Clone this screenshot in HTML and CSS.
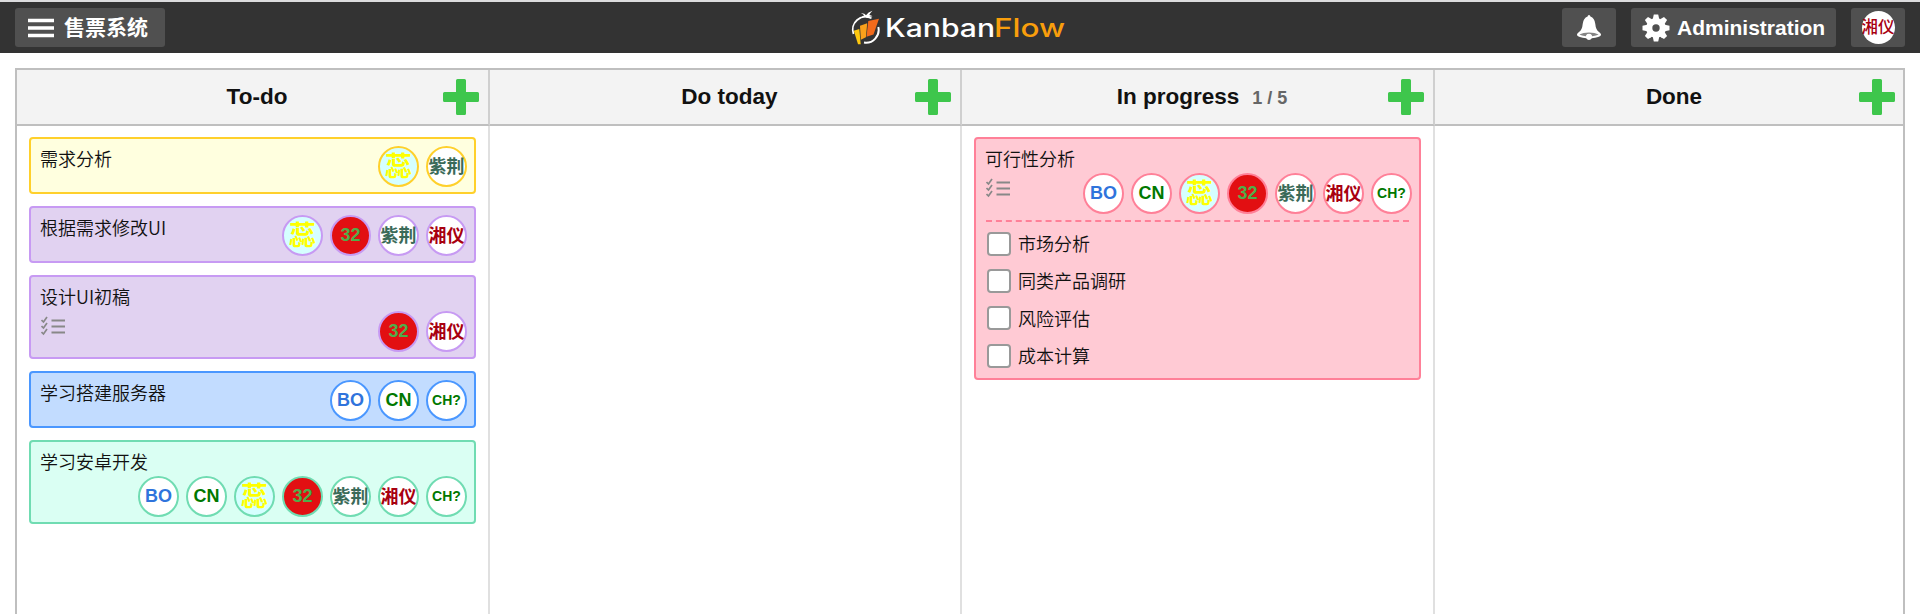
FILE: index.html
```html
<!DOCTYPE html>
<html lang="zh-CN">
<head>
<meta charset="utf-8">
<title>KanbanFlow</title>
<link rel="stylesheet" href="styles.css">
</head>
<body>
<svg class="defs" aria-hidden="true">
  <symbol id="plus" viewBox="0 0 36 36"><path d="M14.500 0h7q1.500 0 1.500 1.500V13h11.500q1.500 0 1.500 1.500v7q0 1.500-1.500 1.500H23v11.500q0 1.500-1.500 1.500h-7q-1.500 0-1.500-1.500V23H1.500Q0 23 0 21.500v-7Q0 13 1.500 13H13V1.500Q13 0 14.500 0z" fill="#3ec64c"/></symbol>
  <symbol id="checklist" viewBox="0 0 24 20"><g fill="none" stroke="#888"><path d="M.5 4l2 2L6 1M.5 10l2 2L6 7M.5 16l2 2L6 13" stroke-width="1.700"/><path d="M10.500 4.500H24M10.500 10.500H24M10.500 16.500H24" stroke-width="2"/></g></symbol>
</svg>
<header class="topbar">
  <div class="side">
    <button class="btn menu"><svg width="28" height="20" viewBox="0 0 28 20"><path d="M1 2.500h26M1 10h26M1 17.500h26" stroke="#fff" stroke-width="3.500"/></svg><span>售票系统</span></button>
  </div>
  <div class="logo">
    <svg class="mark" width="30" height="36" viewBox="0 0 30 36">
      <path d="M3.500 24A12.800 12.800 0 0 1 21.500 8.300" fill="none" stroke="#fff" stroke-width="1.800"/>
      <path d="M14 32.600A12.800 12.800 0 0 0 28.300 17" fill="none" stroke="#fff" stroke-width="2"/>
      <path d="M11 3.300q3.500-.3 5 2Q18 1.800 22.500.7 19.800 3.300 19.300 5q2.200.2 3.200 1.300-3 .3-5 1.700-2.500-1.300-6-.8 1.200-1.600 2.700-1.700Q13.300 4 11 3.300z" fill="#fff"/>
      <path d="M3.800 20.700l5.500-1.800 1.400 15.300H8z" fill="#fec80f"/>
      <path d="M10 15.800l7.200-2.500-1.300 14-5 2.500z" fill="#f9a01b"/>
      <path d="M18.300 10.900L29 8.800l-5.500 15.700-7 2.300z" fill="#f26a1b"/>
    </svg>
    <svg class="word" width="182" height="39" viewBox="0 0 182 39"><text x="1" y="29" textLength="110" lengthAdjust="spacingAndGlyphs" fill="#fff">Kanban</text><text x="110" y="29" textLength="71" lengthAdjust="spacingAndGlyphs" fill="#f99e0c">Flow</text></svg>
  </div>
  <div class="side right">
    <button class="btn bell"><svg width="24" height="25" viewBox="0 0 24 25"><path d="M12 0q1.300 0 1.400 1.500 4.300 1.600 4.900 7.500.5 5.800 3.700 8 2.500 1.700 1.900 3.300-1 2.200-9.200 2.900a3 3 0 0 1-5.400 0Q1.100 22.500.1 20.300-.5 18.700 2 17q3.200-2.200 3.700-8 .6-5.900 4.900-7.500Q10.700 0 12 0z" fill="#fff"/><path d="M2.300 19.600Q6 17.500 12 17.500t9.700 2.100q-2.200 1.300-6.500 1.700a3.400 3.400 0 0 0-6.400 0q-4.300-.4-6.500-1.700z" fill="#858585"/><circle cx="12" cy="21.500" r="2.800" fill="#fff"/></svg></button>
    <button class="btn admin"><svg width="28" height="28" viewBox="-14 -14 28 28"><g fill="#fff"><path id="t" d="M-3-10l.8-3.500h4.400L3-10v20l-.8 3.500h-4.400L-3 10z"/><use href="#t" transform="rotate(45)"/><use href="#t" transform="rotate(90)"/><use href="#t" transform="rotate(135)"/><circle r="10"/></g><circle r="3.700" fill="#505050"/></svg><span>Administration</span></button>
    <button class="btn user"><span class="face">湘仪</span></button>
  </div>
</header>
<main class="board">
  <section class="column">
    <div class="head"><h2>To-do</h2><svg class="plus"><use href="#plus"/></svg></div>
    <div class="cards">
      <article class="card yellow"><p class="title">需求分析</p><div class="people"><i class="rui">蕊</i><i class="zi">紫荆</i></div></article>
      <article class="card purple"><p class="title">根据需求修改UI</p><div class="people"><i class="rui">蕊</i><i class="n32">32</i><i class="zi">紫荆</i><i class="xy">湘仪</i></div></article>
      <article class="card purple tall"><p class="title">设计UI初稿</p><svg class="list"><use href="#checklist"/></svg><div class="people"><i class="n32">32</i><i class="xy">湘仪</i></div></article>
      <article class="card blue"><p class="title">学习搭建服务器</p><div class="people"><i class="bo">BO</i><i class="cn">CN</i><i class="ch">CH?</i></div></article>
      <article class="card green tall"><p class="title">学习安卓开发</p><div class="people"><i class="bo">BO</i><i class="cn">CN</i><i class="rui">蕊</i><i class="n32">32</i><i class="zi">紫荆</i><i class="xy">湘仪</i><i class="ch">CH?</i></div></article>
    </div>
  </section>
  <section class="column">
    <div class="head"><h2>Do today</h2><svg class="plus"><use href="#plus"/></svg></div>
  </section>
  <section class="column">
    <div class="head"><h2>In progress<small>1 / 5</small></h2><svg class="plus"><use href="#plus"/></svg></div>
    <div class="cards">
      <article class="card pink tall"><p class="title">可行性分析</p><svg class="list"><use href="#checklist"/></svg><div class="people"><i class="bo">BO</i><i class="cn">CN</i><i class="rui">蕊</i><i class="n32">32</i><i class="zi">紫荆</i><i class="xy">湘仪</i><i class="ch">CH?</i></div>
        <ul class="tasks"><li><span class="box"></span>市场分析</li><li><span class="box"></span>同类产品调研</li><li><span class="box"></span>风险评估</li><li><span class="box"></span>成本计算</li></ul>
      </article>
    </div>
  </section>
  <section class="column">
    <div class="head"><h2>Done</h2><svg class="plus"><use href="#plus"/></svg></div>
  </section>
</main>
</body>
</html>
```
FILE: styles.css
```css
* { box-sizing: border-box; margin: 0; padding: 0; }
body { height: 614px; overflow: hidden; display: flex; flex-direction: column; background: #fff; color: #111; font-family: "Liberation Sans", "Noto Sans CJK SC", sans-serif; }
.defs { display: none; }
.topbar { flex: none; height: 53px; border-top: 2px solid #dcdcde; background: #333; display: flex; align-items: flex-start; padding: 6px 15px 0; }
.side { flex: 1; display: flex; gap: 15px; }
.right { justify-content: flex-end; }
.btn { height: 39px; border: 0; border-radius: 3px; background: #505050; color: #fff; font: bold 21px/37px "Liberation Sans", "Noto Sans CJK SC", sans-serif; display: flex; align-items: center; white-space: nowrap; }
.menu { width: 150px; padding-left: 12px; gap: 9px; }
.bell { width: 54px; justify-content: center; }
.admin { width: 205px; padding-left: 11px; gap: 7px; }
.user { width: 54px; justify-content: center; }
.face { width: 33px; height: 33px; border-radius: 50%; background: #fff; color: #a80010; font-size: 16.500px; font-weight: 500; line-height: 32px; display: flex; justify-content: center; }
.logo { width: 216px; height: 39px; margin-right: 4px; display: flex; gap: 4px; }
.mark { flex: none; margin-top: 2px; }
.word { flex: none; font: 500 25px Inter, sans-serif; }
.board { flex: 1; margin: 15px 15px 0; border: 2px solid #bfbfbf; border-bottom: 0; display: grid; grid-template-columns: 473px 472px 473px 468px; }
.column { border-right: 2px solid #e0e0e0; }
.column:last-child { border-right: 0; }
.head { height: 56px; margin-right: -2px; padding: 0 9px 0 54px; border-right: 2px solid #cfcfcf; border-bottom: 2px solid #bfbfbf; background: #f3f3f3; display: flex; align-items: center; }
.column:last-child .head { margin-right: 0; padding-right: 8px; border-right: 0; }
.head h2 { flex: 1; text-align: center; font-size: 22.500px; line-height: 54px; }
.head small { margin-left: 13px; font-size: 18px; color: #666; }
.plus { width: 36px; height: 36px; flex: none; }
.cards { padding: 11px 12px; display: flex; flex-direction: column; gap: 12px; }
.card { border: 2px solid; border-radius: 4px; padding: 7px 7px 5px 9px; min-height: 57px; display: grid; grid-template-columns: auto 1fr; grid-template-rows: 41px; }
.title { font: 350 18px/25px "Noto Sans CJK SC", sans-serif; white-space: nowrap; }
.people { display: flex; justify-content: flex-end; gap: 7px; border-color: inherit; }
.tall { grid-template-rows: 27px 41px; }
.tall .title { grid-column: 1 / 3; }
.tall .people { grid-column: 2; }
.list { width: 24px; height: 20px; margin: 5px 0 0 1px; }
.people i { width: 41px; height: 41px; border: 2px solid; border-color: inherit; border-radius: 50%; background: #fff; font: bold 18px/37px "Liberation Sans", "Noto Sans CJK SC", sans-serif; display: flex; justify-content: center; white-space: nowrap; }
.people .rui { background: #d5ffff; color: #ff0; font-size: 27px; line-height: 38px; }
.people .zi { color: #3a6a58; line-height: 38px; }
.people .xy { color: #a80010; line-height: 38px; }
.people .n32 { background: #e20f12; color: #4fae4a; }
.people .bo { color: #2f74dc; }
.people .cn { color: #007800; }
.people .ch { color: #007800; font-size: 14px; line-height: 36px; }
.yellow { background: #ffffdf; border-color: #ffd02b; }
.purple { background: #e1d2f1; border-color: #c79af3; }
.blue { background: #c2dcff; border-color: #4a97ff; }
.green { background: #dafff3; border-color: #70dcb2; }
.pink { background: #ffcad4; border-color: #ff8098; }
.tasks { grid-column: 1 / 3; list-style: none; margin: 6px 3px -1.330px 1px; padding: 3px 0 0 1px; border-top: 2px dashed #ff8098; }
.tasks li { height: 37.330px; display: flex; align-items: center; gap: 7px; font: 350 18px/25px "Noto Sans CJK SC", sans-serif; }
.box { width: 24px; height: 24px; border: 2px solid #999; border-radius: 4px; background: #fff; }
```
